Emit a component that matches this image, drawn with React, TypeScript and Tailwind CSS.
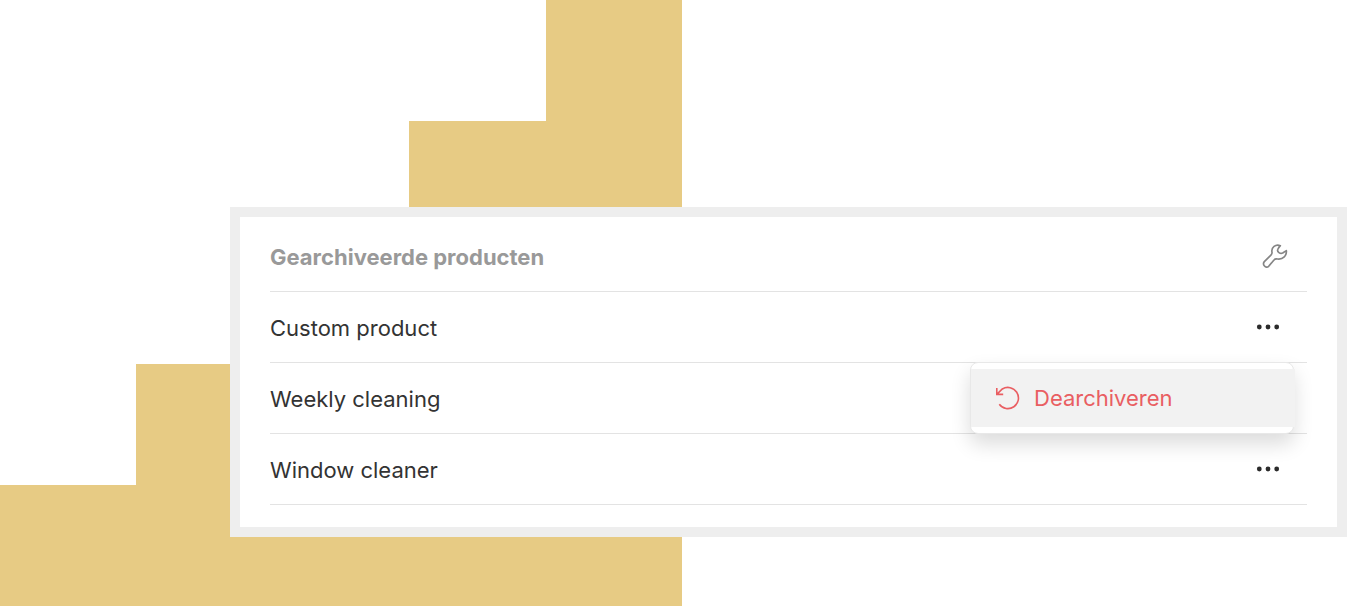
const products = [
    { id: 1, name: "Custom product" },
    { id: 2, name: "Weekly cleaning" },
    { id: 3, name: "Window cleaner" }
];

const Stairs = () => (
    <svg
        className="absolute left-0 top-0 h-[606px] w-[682px]"
        viewBox="0 0 5 5"
        preserveAspectRatio="none"
        fill="#e7cb84"
        shapeRendering="crispEdges"
        aria-hidden="true"
    >
        <path d="M4 0h1v5H0V4h1V3h1V2h1V1h1z" />
    </svg>
);

const WrenchIcon = () => (
    <svg
        className="size-[30px]"
        viewBox="0 0 90 90"
        fill="none"
        stroke="#858585"
        strokeWidth="5"
        strokeLinecap="round"
        strokeLinejoin="round"
        aria-hidden="true"
    >
        <path d="M61 14C47 8 33 19 36 34C37 38 35 40 32 43L13 62C6 70 17 84 26 76L42 57C45 53 48 53 53 54C69 56 81 43 79 29L68 36C60 39 51 33 53 26Q54 22 61 14Z" />
    </svg>
);

const DotsIcon = () => (
    <svg className="h-6 w-6" viewBox="0 0 24 24" fill="#2b2b2b" aria-hidden="true">
        <circle cx="3.3" cy="12" r="2.4" />
        <circle cx="12" cy="12" r="2.4" />
        <circle cx="20.7" cy="12" r="2.4" />
    </svg>
);

const RestoreIcon = () => (
    <svg
        className="size-6 overflow-visible"
        viewBox="0 0 24 24"
        fill="none"
        stroke="currentColor"
        strokeWidth="1.6"
        aria-hidden="true"
    >
        <path d="M.8 2v6.4h6.4M.8 8.4 6.3 3A10.6 10.6 0 1 1 3.3 18.3" />
    </svg>
);

const Menu = () => (
    <div className="absolute right-[13px] top-full z-10 w-[324px] rounded-lg border border-[#e8e8e8] bg-white py-1.5 shadow-[0_10px_20px_rgba(0,0,0,0.14)]">
        <button
            type="button"
            className="flex h-[58px] w-[324px] items-center gap-[14px] bg-[#f2f2f2] pl-[25px] text-[#e95e62]"
        >
            <RestoreIcon />
            Dearchiveren
        </button>
    </div>
);

export default function App() {
    return (
        <main className="relative min-h-screen bg-white pl-[230px] pt-[207px] font-['Inter','Liberation_Sans',sans-serif] text-[22px] leading-7 text-[#333333]">
            <Stairs />
            <section className="relative border-[10px] border-[#eeeeee] bg-white px-[30px] pb-[22px] pt-1">
                <header className="flex h-[71px] items-center justify-between border-b border-[#e3e3e3] pr-[17px]">
                    <h2 className="pt-0.5 font-bold text-[#999999]">
                        Gearchiveerde producten
                    </h2>
                    <button type="button" aria-label="Beheren">
                        <WrenchIcon />
                    </button>
                </header>
                <ul>
                    {products.map((product) => (
                        <li
                            key={product.id}
                            className="relative flex h-[71px] items-center justify-between border-b border-[#e3e3e3] pr-[27px]"
                        >
                            <span className="pt-0.5">{product.name}</span>
                            <button type="button" aria-label="Opties">
                                <DotsIcon />
                            </button>
                            {product.id === 1 && <Menu />}
                        </li>
                    ))}
                </ul>
            </section>
        </main>
    );
}
